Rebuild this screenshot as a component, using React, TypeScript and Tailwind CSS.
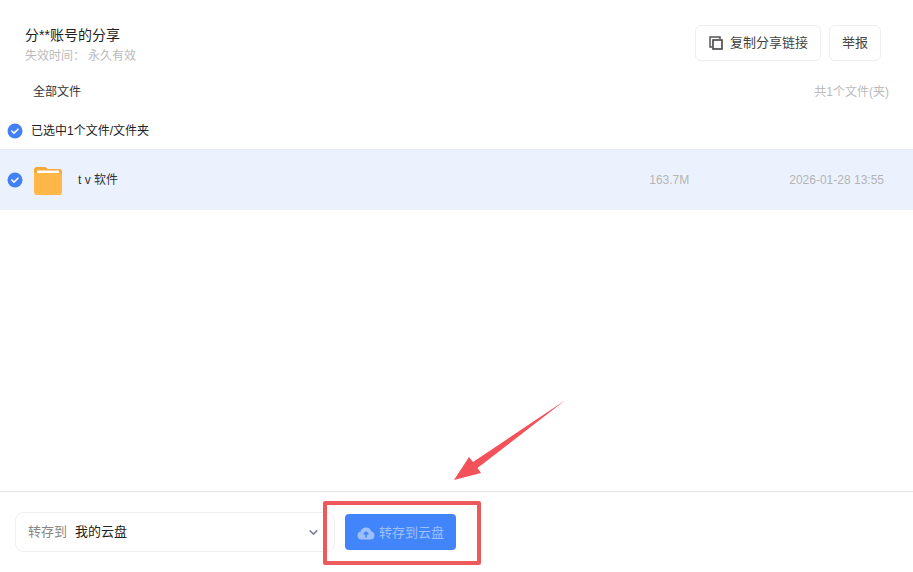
import React from "react";
import { ChevronDown } from "lucide-react";

function CheckCircle() {
  return (
    <svg width="16" height="16" viewBox="0 0 16 16" className="shrink-0">
      <circle cx="8" cy="8" r="7.5" fill="#4180f5" />
      <path d="M4.8 8l2.2 2.1 4-3.9" fill="none" stroke="#fff" strokeWidth="1.6" strokeLinecap="round" strokeLinejoin="round" />
    </svg>
  );
}

function FolderIcon() {
  return (
    <svg width="28" height="29" viewBox="0 0 28 29" className="shrink-0">
      <path d="M0 4a3 3 0 0 1 3-3h7.5c1.2 0 2 .6 2.8 1.5L14 3h11a3 3 0 0 1 3 3v8H0z" fill="#f5a93a" />
      <rect x="3" y="4.5" width="22" height="6" fill="#fff" />
      <path d="M0 7h25a3 3 0 0 1 3 3v16a3 3 0 0 1-3 3H3a3 3 0 0 1-3-3z" fill="#ffb848" />
    </svg>
  );
}

function CopyIcon() {
  return (
    <svg width="14" height="14" viewBox="0 0 14 14" fill="none" className="shrink-0">
      <path d="M3 11H1V1h10v2" stroke="#555" strokeWidth="1.5" />
      <rect x="4" y="4" width="9" height="9" stroke="#444" strokeWidth="1.6" />
    </svg>
  );
}

function CloudIcon() {
  return (
    <svg width="18" height="14" viewBox="0 0 18 14" className="shrink-0">
      <path d="M4.5 13.5a4 4 0 0 1-.8-7.9 5.5 5.5 0 0 1 10.6 0 4 4 0 0 1-.8 7.9z" fill="#9dc0fb" />
      <path d="M9 11.5V6.5M6.7 8.4L9 6.1l2.3 2.3" fill="none" stroke="#4285fb" strokeWidth="1.6" />
    </svg>
  );
}

export default function App() {
  return (
    <div
      className="relative flex flex-col w-[913px] h-[572px] bg-white overflow-hidden"
      style={{ fontFamily: '"Liberation Sans", "Noto Sans CJK SC", sans-serif' }}
    >
      {/* 顶部 */}
      <div className="flex justify-between h-[70px] pt-[25px] pl-[25px] pr-[32px] shrink-0">
        <div>
          <div className="text-[14px] leading-[20px] text-[#222]">分**账号的分享</div>
          <div className="flex mt-px text-[12px] leading-[20px] text-[#bbb]">
            <span className="w-[63px]">失效时间：</span>
            <span>永久有效</span>
          </div>
        </div>
        <div className="flex gap-2 h-[36px]">
          <button className="flex items-center gap-[7px] w-[126px] pl-[13px] rounded-md border border-[#eeeeee] text-[13px] text-[#444]">
            <CopyIcon />
            复制分享链接
          </button>
          <button className="w-[52px] rounded-md border border-[#eeeeee] text-[13px] text-[#444]">举报</button>
        </div>
      </div>

      <div className="flex justify-between items-center h-[42px] pt-[2px] pl-[33px] pr-[24px] shrink-0">
        <span className="text-[12px] text-[#333]">全部文件</span>
        <span className="text-[12px] text-[#bbb]">共1个文件(夹)</span>
      </div>

      <div className="flex items-center gap-2 h-[37px] pl-[7px] shrink-0">
        <CheckCircle />
        <span className="text-[12px] text-[#222]">已选中1个文件/文件夹</span>
      </div>

      {/* 文件行 */}
      <div className="flex items-center h-[61px] pl-[7px] pr-[29px] bg-[#ebf2fd] border-t border-[#e6ebf3] shrink-0">
        <CheckCircle />
        <div className="ml-[11px]">
          <FolderIcon />
        </div>
        <span className="ml-[16px] text-[12px] text-[#333]">t v 软件</span>
        <span className="ml-auto text-[12px] text-[#b4b4b4]">163.7M</span>
        <span className="ml-[100px] text-[12px] text-[#b4b4b4]">2026-01-28 13:55</span>
      </div>

      <div className="flex-1" />

      {/* 底部 */}
      <div className="flex items-center h-[81px] pl-[15px] border-t border-[#e5e5e5] shrink-0">
        <div className="flex items-center w-[320px] h-[40px] pl-[12px] pr-[14px] rounded-lg border border-[#f0f0f0]">
          <span className="text-[13px] text-[#888]">转存到</span>
          <span className="ml-2 text-[13px] text-[#222]">我的云盘</span>
          <ChevronDown className="ml-auto text-[#7f8791]" size={13} strokeWidth={3} />
        </div>
        <button className="flex items-center justify-center gap-[4px] ml-[10px] w-[111px] h-[36px] pt-px rounded bg-[#4285fb] text-[13px] text-[#9dc0fb]">
          <CloudIcon />
          转存到云盘
        </button>
      </div>

      {/* 标注 */}
      <div className="absolute left-[323px] top-[501px] w-[158px] h-[64px] border-[4px] border-[#ee5a5c] rounded-[2px]" />
      <svg className="absolute left-0 top-0 pointer-events-none" width="913" height="572">
        <polygon points="565.5,400 477.5,468 481,473 454,480 469,457 473,462" fill="#f4525a" />
      </svg>
    </div>
  );
}
